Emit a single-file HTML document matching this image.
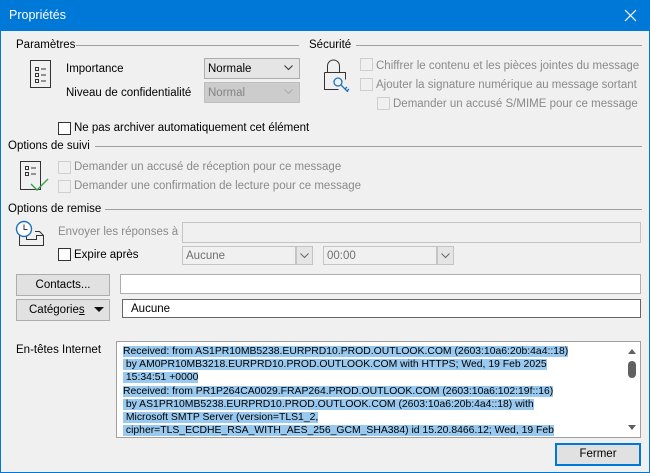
<!DOCTYPE html>
<html><head><meta charset="utf-8"><style>
*{box-sizing:border-box;margin:0;padding:0}
body{width:650px;height:473px;overflow:hidden;background:#f0f0f0;font-family:"Liberation Sans",sans-serif;font-size:11.5px;color:#000;position:relative}
.a{position:absolute;white-space:nowrap}
.t{position:absolute;white-space:nowrap;line-height:14px}
.g{color:#a0a0a0}
.hl{position:absolute;height:1px;background:#a0a0a0}
.cb{position:absolute;width:13px;height:13px;border:1px solid #333;background:#fff}
.cbd{position:absolute;width:13px;height:13px;border:1px solid #cfcfcf;background:#f0f0f0}
.box{position:absolute;border:1px solid #a0a0a0;background:#fff}
.btn{position:absolute;border:1px solid #adadad;background:#e1e1e1;text-align:center}
</style></head><body>
<div class="a" style="left:0;top:0;width:650px;height:31px;background:#0078d7"></div>
<div class="t" style="left:9px;top:8px;color:#fff;font-size:12.5px">Propriétés</div>
<svg class="a" style="left:624px;top:9px" width="13" height="13"><path d="M1 1L12 12M12 1L1 12" stroke="#fff" stroke-width="1.2"/></svg>
<div class="a" style="left:0;top:31px;width:1px;height:442px;background:#0078d7"></div>
<div class="a" style="left:649px;top:31px;width:1px;height:442px;background:#0078d7"></div>
<div class="a" style="left:0;top:472px;width:650px;height:1px;background:#0078d7"></div>

<div class="t" style="left:16px;top:38px">Paramètres</div>
<div class="hl" style="left:76px;top:45px;width:223px"></div>
<div class="t" style="left:309px;top:38px">Sécurité</div>
<div class="hl" style="left:356px;top:45px;width:286px"></div>

<svg class="a" style="left:29px;top:59px" width="24" height="30"><rect x="1.5" y="1.5" width="20" height="27" fill="none" stroke="#333"/><rect x="6.5" y="8.5" width="3" height="3" fill="none" stroke="#333"/><rect x="6.5" y="14.5" width="3" height="3" fill="none" stroke="#333"/><rect x="6.5" y="20.5" width="3" height="3" fill="none" stroke="#333"/><path d="M12 10h5M12 16h5M12 22h5" stroke="#333"/></svg>
<div class="t" style="left:66px;top:62px">Importance</div>
<div class="t" style="left:66px;top:86px">Niveau de confidentialité</div>
<div class="box" style="left:204px;top:58px;width:96px;height:21px;background:#e5e5e5;border-color:#adadad"></div>
<div class="t" style="left:208px;top:62px">Normale</div>
<svg class="a" style="left:284px;top:65px" width="9" height="6"><path d="M0.5 0.5L4.5 4.5L8.5 0.5" fill="none" stroke="#333"/></svg>
<div class="box" style="left:204px;top:82px;width:96px;height:21px;background:#ccc;border-color:#bfbfbf"></div>
<div class="t g" style="left:208px;top:86px;color:#838383">Normal</div>
<svg class="a" style="left:284px;top:89px" width="9" height="6"><path d="M0.5 0.5L4.5 4.5L8.5 0.5" fill="none" stroke="#aaa"/></svg>

<div class="cb" style="left:58px;top:122px"></div>
<div class="t" style="left:74px;top:121px">Ne pas archiver automatiquement cet élément</div>

<svg class="a" style="left:322px;top:58px" width="32" height="34"><path d="M5.5 14V8a6 6 0 0 1 12 0v6" fill="none" stroke="#333"/><path d="M2.5 14.5h21v7M2.5 14.5v17h14" fill="none" stroke="#333"/><circle cx="16" cy="24" r="4" fill="none" stroke="#1e73be" stroke-width="1.3"/><path d="M19 27l7 7M23 31l2-2M25 33l2-2" stroke="#1e73be" stroke-width="1.3"/></svg>
<div class="cbd" style="left:360px;top:58px"></div>
<div class="t g" style="left:376px;top:59px;color:#8a8a8a">Chiffrer le contenu et les pièces jointes du message</div>
<div class="cbd" style="left:360px;top:78px"></div>
<div class="t g" style="left:376px;top:78px;color:#8a8a8a">Ajouter la signature numérique au message sortant</div>
<div class="cbd" style="left:377px;top:97px"></div>
<div class="t g" style="left:393px;top:97px;color:#8a8a8a">Demander un accusé S/MIME pour ce message</div>

<div class="t" style="left:8px;top:139px">Options de suivi</div>
<div class="hl" style="left:95px;top:146px;width:547px"></div>
<svg class="a" style="left:19px;top:160px" width="30" height="32"><rect x="1.5" y="1.5" width="20" height="28" fill="none" stroke="#333"/><rect x="6.5" y="6.5" width="3" height="3" fill="none" stroke="#333"/><rect x="6.5" y="12.5" width="3" height="3" fill="none" stroke="#333"/><path d="M12 8h5M12 14h5" stroke="#333"/><path d="M12 24l6 6 11-11" fill="none" stroke="#3aa04a" stroke-width="1.4"/></svg>
<div class="cbd" style="left:58px;top:161px"></div>
<div class="t g" style="left:74px;top:160px;color:#8a8a8a">Demander un accusé de réception pour ce message</div>
<div class="cbd" style="left:58px;top:180px"></div>
<div class="t g" style="left:74px;top:179px;color:#8a8a8a">Demander une confirmation de lecture pour ce message</div>

<div class="t" style="left:8px;top:202px">Options de remise</div>
<div class="hl" style="left:105px;top:209px;width:537px"></div>
<svg class="a" style="left:15px;top:220px" width="34" height="28"><path d="M4.5 15.5l3-4h6M20 11.5h4.5l4 4v10h-24v-10h7v4h10v-4h7" fill="none" stroke="#333"/><circle cx="9" cy="9" r="7.5" fill="#fff" stroke="#1e73be" stroke-width="1.4"/><path d="M9 4.5v5h3.5" fill="none" stroke="#333"/></svg>
<div class="t g" style="left:58px;top:225px;color:#8a8a8a">Envoyer les réponses à</div>
<div class="box" style="left:182px;top:222px;width:459px;height:21px;background:#f0f0f0;border-color:#c4c4c4"></div>
<div class="cb" style="left:58px;top:248px"></div>
<div class="t" style="left:74px;top:248px">Expire après</div>
<div class="box" style="left:182px;top:246px;width:114px;height:19px;background:#f0f0f0;border-color:#c4c4c4"></div>
<div class="t" style="left:186px;top:249px;color:#707070">Aucune</div>
<div class="btn" style="left:296px;top:246px;width:17px;height:19px;background:#e5e5e5;border-color:#c4c4c4"></div>
<svg class="a" style="left:300px;top:253px" width="9" height="6"><path d="M0.5 0.5L4.5 4.5L8.5 0.5" fill="none" stroke="#666"/></svg>
<div class="box" style="left:323px;top:246px;width:114px;height:19px;background:#f0f0f0;border-color:#c4c4c4"></div>
<div class="t" style="left:327px;top:249px;color:#707070">00:00</div>
<div class="btn" style="left:437px;top:246px;width:17px;height:19px;background:#e5e5e5;border-color:#c4c4c4"></div>
<svg class="a" style="left:441px;top:253px" width="9" height="6"><path d="M0.5 0.5L4.5 4.5L8.5 0.5" fill="none" stroke="#666"/></svg>

<div class="btn" style="left:16px;top:274px;width:94px;height:22px"></div>
<div class="t" style="left:16px;top:278px;width:94px;text-align:center">Contacts...</div>
<div class="box" style="left:120px;top:274px;width:521px;height:20px;border-color:#adadad"></div>
<div class="btn" style="left:16px;top:299px;width:94px;height:22px"></div>
<div class="t" style="left:29px;top:303px">Catégorie<u>s</u></div>
<svg class="a" style="left:94px;top:307px" width="10" height="6"><path d="M0 0h10L5 5z" fill="#111"/></svg>
<div class="box" style="left:122px;top:299px;width:519px;height:19px;border-color:#666"></div>
<div class="t" style="left:131px;top:302px">Aucune</div>

<div class="t" style="left:16px;top:343px">En-têtes Internet</div>
<div class="box" style="left:116px;top:341px;width:525px;height:97px"></div>
<div class="a" style="left:624px;top:342px;width:16px;height:95px;background:#fff"></div>
<svg class="a" style="left:627px;top:348px" width="10" height="84"><path d="M1 6h8L5 1z" fill="#606060"/><rect x="1" y="13" width="8" height="17" rx="4" fill="#606060"/><path d="M1 77h8L5 82z" fill="#606060"/></svg>
<div class="a" style="left:123px;top:345px;width:500px;height:92px;overflow:hidden;font-size:10.4px;line-height:13.2px;color:#000">
<span style="background:#99c9ef">Received: from AS1PR10MB5238.EURPRD10.PROD.OUTLOOK.COM (2603:10a6:20b:4a4::18)</span><br>
<span style="background:#99c9ef">&nbsp;by AM0PR10MB3218.EURPRD10.PROD.OUTLOOK.COM with HTTPS; Wed, 19 Feb 2025</span><br>
<span style="background:#99c9ef">&nbsp;15:34:51 +0000</span><br>
<span style="background:#99c9ef">Received: from PR1P264CA0029.FRAP264.PROD.OUTLOOK.COM (2603:10a6:102:19f::16)</span><br>
<span style="background:#99c9ef">&nbsp;by AS1PR10MB5238.EURPRD10.PROD.OUTLOOK.COM (2603:10a6:20b:4a4::18) with</span><br>
<span style="background:#99c9ef">&nbsp;Microsoft SMTP Server (version=TLS1_2,</span><br>
<span style="background:#99c9ef">&nbsp;cipher=TLS_ECDHE_RSA_WITH_AES_256_GCM_SHA384) id 15.20.8466.12; Wed, 19 Feb</span>
</div>

<div class="btn" style="left:555px;top:443px;width:86px;height:23px;border:2px solid #0078d7"></div>
<div class="t" style="left:555px;top:447px;width:86px;text-align:center">Fermer</div>
</body></html>
